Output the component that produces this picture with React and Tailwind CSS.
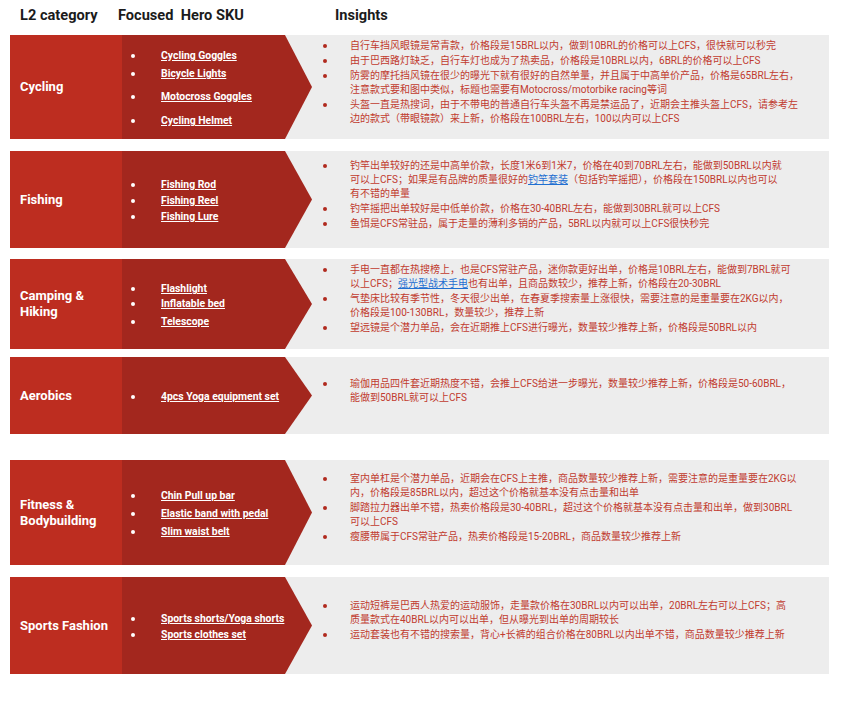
import React from 'react';

const Link = ({ children }) => (
  <span className="text-[#1f6fd1] underline">{children}</span>
);

const rows = [
  {
    name: 'Cycling',
    height: 'h-[104px]',
    gap: 'mt-0',
    skus: [
      { label: 'Cycling Goggles', mt: 'mt-0' },
      { label: 'Bicycle Lights', mt: 'mt-[2px]' },
      { label: 'Motocross Goggles', mt: 'mt-[7px]' },
      { label: 'Cycling Helmet', mt: 'mt-[8px]' },
    ],
    insights: [
      ['自行车挡风眼镜是常青款，价格段是15BRL以内，做到10BRL的价格可以上CFS，很快就可以秒完'],
      ['由于巴西路灯缺乏，自行车灯也成为了热卖品，价格段是10BRL以内，6BRL的价格可以上CFS'],
      [
        '防雾的摩托挡风镜在很少的曝光下就有很好的自然单量，并且属于中高单价产品，价格是65BRL左右，',
        '注意款式要和图中类似，标题也需要有Motocross/motorbike racing等词',
      ],
      [
        '头盔一直是热搜词，由于不带电的普通自行车头盔不再是禁运品了，近期会主推头盔上CFS，请参考左',
        '边的款式（带眼镜款）来上新，价格段在100BRL左右，100以内可以上CFS',
      ],
    ],
  },
  {
    name: 'Fishing',
    height: 'h-[97px]',
    gap: 'mt-[12px]',
    skus: [
      { label: 'Fishing Rod', mt: 'mt-0' },
      { label: 'Fishing Reel', mt: 'mt-0' },
      { label: 'Fishing Lure', mt: 'mt-0' },
    ],
    insights: [
      [
        '钓竿出单较好的还是中高单价款，长度1米6到1米7，价格在40到70BRL左右，能做到50BRL以内就',
        <>可以上CFS；如果是有品牌的质量很好的<Link>钓竿套装</Link>（包括钓竿摇把），价格段在150BRL以内也可以</>,
        '有不错的单量',
      ],
      ['钓竿摇把出单较好是中低单价款，价格在30-40BRL左右，能做到30BRL就可以上CFS'],
      ['鱼饵是CFS常驻品，属于走量的薄利多销的产品，5BRL以内就可以上CFS很快秒完'],
    ],
  },
  {
    name: (
      <>
        Camping &amp;
        <br />
        Hiking
      </>
    ),
    height: 'h-[90px]',
    gap: 'mt-[11px]',
    skus: [
      { label: 'Flashlight', mt: 'mt-0' },
      { label: 'Inflatable bed', mt: 'mt-[-1px]' },
      { label: 'Telescope', mt: 'mt-[2px]' },
    ],
    insights: [
      [
        '手电一直都在热搜榜上，也是CFS常驻产品，迷你款更好出单，价格是10BRL左右，能做到7BRL就可',
        <>以上CFS；<Link>强光型战术手电</Link>也有出单，且商品数较少，推荐上新，价格段在20-30BRL</>,
      ],
      [
        '气垫床比较有季节性，冬天很少出单，在春夏季搜索量上涨很快，需要注意的是重量要在2KG以内，',
        '价格段是100-130BRL，数量较少，推荐上新',
      ],
      ['望远镜是个潜力单品，会在近期推上CFS进行曝光，数量较少推荐上新，价格段是50BRL以内'],
    ],
  },
  {
    name: 'Aerobics',
    height: 'h-[77px]',
    gap: 'mt-[8px]',
    skus: [{ label: '4pcs Yoga equipment set', mt: 'mt-0' }],
    insights: [
      [
        '瑜伽用品四件套近期热度不错，会推上CFS给进一步曝光，数量较少推荐上新，价格段是50-60BRL，',
        '能做到50BRL就可以上CFS',
      ],
    ],
  },
  {
    name: (
      <>
        Fitness &amp;
        <br />
        Bodybuilding
      </>
    ),
    height: 'h-[105px]',
    gap: 'mt-[26px]',
    skus: [
      { label: 'Chin Pull up bar', mt: 'mt-0' },
      { label: 'Elastic band with pedal', mt: 'mt-[2px]' },
      { label: 'Slim waist belt', mt: 'mt-[2px]' },
    ],
    insights: [
      [
        '室内单杠是个潜力单品，近期会在CFS上主推，商品数量较少推荐上新，需要注意的是重量要在2KG以',
        '内，价格段是85BRL以内，超过这个价格就基本没有点击量和出单',
      ],
      [
        '脚踏拉力器出单不错，热卖价格段是30-40BRL，超过这个价格就基本没有点击量和出单，做到30BRL',
        '可以上CFS',
      ],
      ['瘦腰带属于CFS常驻产品，热卖价格段是15-20BRL，商品数量较少推荐上新'],
    ],
  },
  {
    name: 'Sports Fashion',
    height: 'h-[97px]',
    gap: 'mt-[12px]',
    skus: [
      { label: 'Sports shorts/Yoga shorts', mt: 'mt-0' },
      { label: 'Sports clothes set', mt: 'mt-0' },
    ],
    insights: [
      [
        '运动短裤是巴西人热爱的运动服饰，走量款价格在30BRL以内可以出单，20BRL左右可以上CFS；高',
        '质量款式在40BRL以内可以出单，但从曝光到出单的周期较长',
      ],
      ['运动套装也有不错的搜索量，背心+长裤的组合价格在80BRL以内出单不错，商品数量较少推荐上新'],
    ],
  },
];

const CategoryRow = ({ row }) => (
  <div className={`flex w-[819px] ${row.height} ${row.gap}`}>
    {/* L2 category */}
    <div className="flex w-[112px] shrink-0 items-center bg-[#bd2d20] pl-[10px] text-[13px] font-bold leading-[16px] text-white">
      <div>{row.name}</div>
    </div>

    <div className="flex flex-1 items-stretch bg-[#ededed]">
      {/* hero SKUs with arrow */}
      <div className="flex w-[190px] shrink-0 items-center bg-[#a3271e] pl-[9px] [clip-path:polygon(0_0,163px_0,100%_50%,163px_100%,0_100%)]">
        <ul className="mt-[3px]">
          {row.skus.map((sku, i) => (
            <li key={i} className={`flex items-center text-[10.4px] font-bold leading-[16px] text-white ${sku.mt}`}>
              <span className="w-[30px] shrink-0">
                <span className="block h-[4px] w-[4px] rounded-full bg-white" />
              </span>
              <span className="whitespace-nowrap underline">{sku.label}</span>
            </li>
          ))}
        </ul>
      </div>

      {/* insights */}
      <div className="flex flex-1 items-center pb-[10px] pl-[11px]">
        <ul>
          {row.insights.map((lines, i) => (
            <li key={i} className={`flex text-[10px] leading-[14px] text-[#c13b2f] ${i > 0 ? 'mt-[1px]' : ''}`}>
              <span className="flex h-[14px] w-[27px] shrink-0 items-center">
                <span className="block h-[4px] w-[4px] rounded-full bg-[#b02a1e]" />
              </span>
              <span>
                {lines.map((line, j) => (
                  <span key={j} className="block whitespace-nowrap">
                    {line}
                  </span>
                ))}
              </span>
            </li>
          ))}
        </ul>
      </div>
    </div>
  </div>
);

const App = () => {
  return (
    <div className="min-h-[711px] w-[845px] bg-white pl-[10px] font-['Roboto','Noto_Sans_CJK_SC',sans-serif]">
      <div className="flex h-[35px] pl-[10px] pt-[5px] text-[14.6px] font-bold leading-[20px] text-[#1b1b1b]">
        <span className="w-[98px]">L2 category</span>
        <span className="w-[217px] whitespace-pre">Focused  Hero SKU</span>
        <span>Insights</span>
      </div>
      {rows.map((row, i) => (
        <CategoryRow key={i} row={row} />
      ))}
    </div>
  );
};

export default App;
